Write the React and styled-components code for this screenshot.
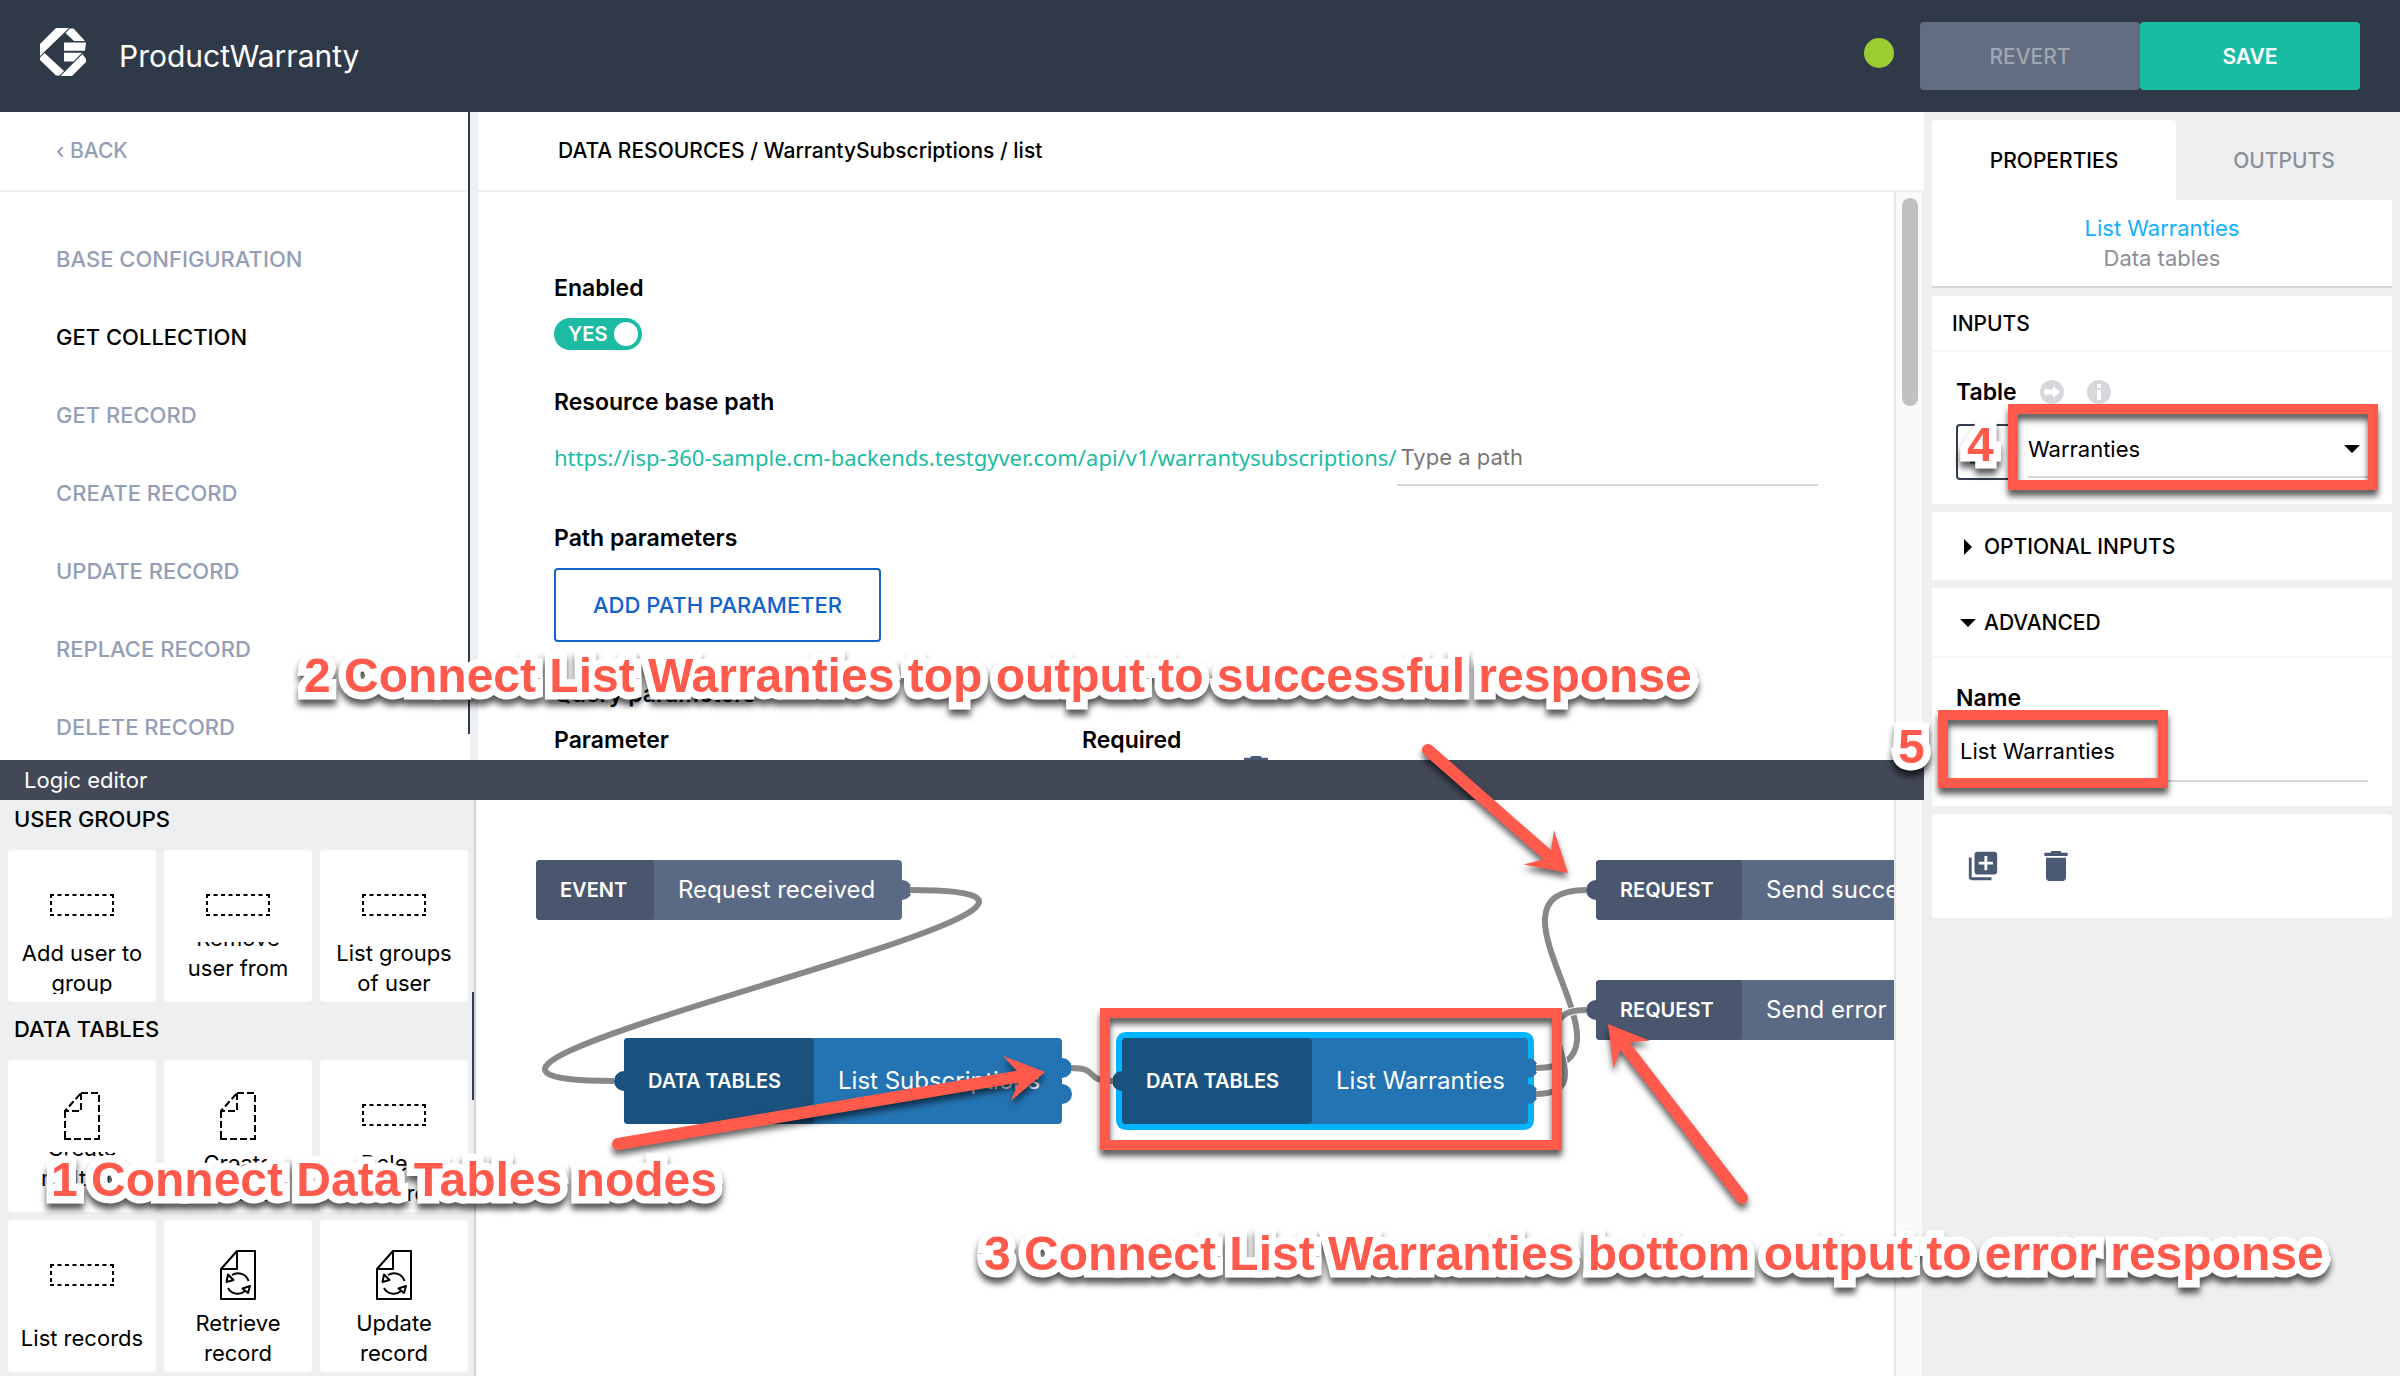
import React from "react";
import styled, { createGlobalStyle, css } from "styled-components";
import { MdDelete, MdLibraryAdd } from "react-icons/md";

const color = {
  header: "#303948",
  bar: "#424856",
  panel: "#eeeff1",
  line: "#d5d6db",
  muted: "#949eb6",
  green: "#1cbca4",
  blue: "#1262cc",
  red: "#ff5a4c",
  icon: "#4a5a75",
  ink: "#000000",
};

const Global = createGlobalStyle`
  *, *::before, *::after { box-sizing: border-box; }
  body {
    margin: 0;
    background: #fff;
    color: ${color.ink};
    font: 400 22px/30px Inter, "Liberation Sans", sans-serif;
  }
  button, input, select { font: inherit; color: inherit; border: 0; padding: 0; background: none; }
  button { cursor: pointer; }
  h1, h2, h3, p, ul { margin: 0; padding: 0; font: inherit; list-style: none; }
`;

const caps = css`
  font-size: 21px;
  line-height: 30px;
  text-transform: uppercase;
`;

/* ---------- shell ---------- */

const Shell = styled.div`
  position: relative;
  display: flex;
  flex-direction: column;
  height: 100vh;
  overflow: hidden;
`;

const Header = styled.header`
  display: flex;
  align-items: center;
  flex: none;
  height: 112px;
  padding: 0 40px;
  background: ${color.header};
  color: #fff;
`;

const LogoMark = styled.svg`
  flex: none;
  margin-bottom: 8px;
`;

const AppTitle = styled.h1`
  flex: 1;
  padding-left: 32px;
  font-size: 30px;
  line-height: 40px;
`;

const Status = styled.span`
  width: 30px;
  height: 30px;
  margin: 0 26px 6px 0;
  border-radius: 50%;
  background: #9bcd33;
`;

const HeaderButton = styled.button`
  ${caps}
  width: 220px;
  height: 68px;
  padding-top: 2px;
  border-radius: 4px;
  font-weight: ${(p) => (p.$primary ? 600 : 500)};
  background: ${(p) => (p.$primary ? "#18bca5" : "#636d81")};
  color: ${(p) => (p.$primary ? "#fff" : "#a0a6b2")};
`;

const Body = styled.div`
  display: grid;
  grid-template-columns: minmax(0, 1fr) 476px;
  flex: 1;
  min-height: 0;
`;

const Workspace = styled.div`
  display: flex;
  flex-direction: column;
  min-height: 0;
`;

/* ---------- resource section ---------- */

const Resource = styled.section`
  display: grid;
  grid-template-columns: 478px minmax(0, 1fr);
  flex: 9 1 0;
  min-height: 0;
  overflow: hidden;
`;

const SideNav = styled.nav`
  display: grid;
  grid-template-columns: minmax(0, 1fr) 2px 8px;
  min-height: 0;
  overflow: hidden;
`;

const NavThumb = styled.div`
  margin-bottom: 32px;
  background: ${color.header};
`;

const Gutter = styled.div`
  background: ${color.panel};
`;

const TopRow = styled.div`
  ${caps}
  text-transform: none;
  display: flex;
  align-items: center;
  flex: none;
  height: 80px;
  padding-left: ${(p) => p.$inset};
  border-bottom: 2px solid #efeff0;
  font-weight: 500;
`;

const NavLink = styled.a`
  display: block;
  color: ${(p) => (p.$active ? color.ink : color.muted)};
  font-weight: 500;
  text-decoration: none;
  text-transform: uppercase;
`;

const NavList = styled.ul`
  padding: 28px 0 0 56px;
`;

const NavItem = styled.li`
  display: flex;
  align-items: center;
  height: 78px;
`;

const Content = styled.div`
  display: flex;
  flex-direction: column;
  min-height: 0;
`;

const Scroller = styled.div`
  display: grid;
  grid-template-columns: minmax(0, 1fr) 30px;
  flex: 1;
  min-height: 0;
  overflow: hidden;
`;

const Track = styled.div`
  padding: 6px 4px 0 6px;
  border: solid #e6e6e8;
  border-width: 0 2px 0 2px;
  border-right-color: ${color.panel};
  background: #fafafa;
`;

const Thumb = styled.div`
  height: 208px;
  border-radius: 8px;
  background: #c1c1c1;
`;

const Form = styled.div`
  display: flex;
  flex-direction: column;
  gap: 36px;
  min-height: 0;
  padding: 80px 76px 0;
`;

const Field = styled.div`
  display: flex;
  flex-direction: column;
  align-items: flex-start;
  flex: none;
  gap: 14px;
`;

const FieldLabel = styled.label`
  font-size: 23px;
  font-weight: 600;
  line-height: 32px;
`;

const Toggle = styled.label`
  display: flex;
  align-items: center;
  justify-content: space-between;
  position: relative;
  width: 88px;
  height: 32px;
  padding: 0 4px 0 14px;
  border-radius: 16px;
  background: ${color.green};
  color: #fff;
  font-size: 20px;
  font-weight: 600;
  input { position: absolute; inset: 0; margin: 0; opacity: 0; }
  i { width: 24px; height: 24px; border-radius: 50%; background: #fff; }
`;

const PathRow = styled.div`
  display: flex;
  align-items: stretch;
  width: 100%;
  max-width: 1264px;
  height: 54px;
`;

const BaseUrl = styled.span`
  font-family: "Noto Sans", sans-serif;
  line-height: 50px;
  color: ${color.green};
  white-space: nowrap;
`;

const LineInput = styled.input`
  flex: 1;
  width: 100%;
  min-width: 0;
  padding: 0 4px 2px;
  border-bottom: 2px solid ${color.line};
  outline: none;
  &::placeholder { color: #777; opacity: 1; }
`;

const OutlineButton = styled.button`
  height: 74px;
  padding: 0 37px;
  border: 2px solid ${color.blue};
  border-radius: 4px;
  color: ${color.blue};
  font-weight: 500;
  text-transform: uppercase;
`;

const ParamTable = styled.table`
  border-collapse: collapse;
  th { width: 528px; padding: 0; text-align: left; font-size: 23px; font-weight: 600; line-height: 32px; }
  td { padding: 0; }
`;

const IconButton = styled.button`
  display: flex;
  color: ${color.icon};
`;

const RowIcon = styled(IconButton)`
  margin-left: 162px;
`;

/* ---------- logic editor ---------- */

const LogicBar = styled.h2`
  flex: none;
  height: 40px;
  padding-left: 24px;
  background: ${color.bar};
  color: #fff;
  font-size: 22px;
  line-height: 40px;
`;

const Logic = styled.section`
  display: grid;
  grid-template-columns: 476px minmax(0, 1fr) 30px;
  flex: 8 1 0;
  min-height: 0;
  overflow: hidden;
`;

const Palette = styled.aside`
  display: grid;
  grid-template-columns: minmax(0, 1fr) 2px;
  min-height: 0;
  border-right: 2px solid #d0d3da;
  background: ${color.panel};
  overflow: hidden;
`;

const PaletteGroups = styled.div`
  display: flex;
  flex-direction: column;
  gap: 8px;
  min-height: 0;
`;

const PaletteThumb = styled.div`
  height: 108px;
  margin-top: 192px;
  background: #2f3d4f;
`;

const GroupTitle = styled.h3`
  padding: 4px 14px 16px;
  font-weight: 500;
  text-transform: uppercase;
`;

const CardGrid = styled.div`
  display: grid;
  grid-template-columns: repeat(3, 148px);
  gap: 8px;
  padding-left: 8px;
`;

const Card = styled.button`
  display: flex;
  flex-direction: column;
  align-items: center;
  gap: 12px;
  height: 152px;
  padding: 30px 8px 8px;
  border-radius: 4px;
  background: #fff;
  svg { flex: none; height: 50px; }
`;

const CardLabel = styled.span`
  display: flex;
  flex-direction: column;
  justify-content: center;
  flex: none;
  height: 52px;
  overflow: hidden;
  white-space: nowrap;
`;

const Canvas = styled.div`
  position: relative;
  overflow: hidden;
`;

const Wires = styled.svg`
  position: absolute;
  left: 0;
  top: 0;
  overflow: visible;
`;

const Node = styled.div`
  position: absolute;
  left: ${(p) => p.$x}px;
  top: ${(p) => p.$y}px;
  display: flex;
  width: ${(p) => p.$w}px;
  height: ${(p) => (p.$blue ? 86 : 60)}px;
  border-radius: 4px;
  background: ${(p) => (p.$blue ? "#2474b3" : "#5b6a84")};
  box-shadow: ${(p) => (p.$selected ? "0 0 0 6px #00b4ff" : "none")};
  color: #fff;
  font-size: 24px;
  white-space: nowrap;
`;

const NodeTag = styled.span`
  display: flex;
  align-items: center;
  flex: none;
  width: ${(p) => p.$w}px;
  padding-left: 24px;
  border-radius: 4px;
  background: ${(p) => (p.$blue ? "#1a527f" : "#4a566d")};
  font-size: 20px;
  font-weight: 600;
`;

const NodeLabel = styled.span`
  display: flex;
  align-items: center;
  padding-left: 24px;
`;

const Port = styled.i`
  position: absolute;
  top: ${(p) => p.$y - 10}px;
  ${(p) => (p.$side === "in" ? "left: -10px;" : "right: -10px;")}
  width: 20px;
  height: 20px;
  border-radius: 10px;
  background: ${(p) => p.$fill};
`;

/* ---------- properties panel ---------- */

const Inspector = styled.aside`
  display: flex;
  flex-direction: column;
  gap: 8px;
  padding: 8px;
  background: ${color.panel};
`;

const Tabs = styled.div`
  display: grid;
  grid-template-columns: 244px minmax(0, 1fr);
`;

const Tab = styled.button`
  ${caps}
  height: 80px;
  padding-top: 2px;
  border-radius: 4px 4px 0 0;
  background: ${(p) => (p.$active ? "#fff" : "transparent")};
  color: ${(p) => (p.$active ? color.ink : "#8b8f98")};
  font-weight: 500;
`;

const Summary = styled.div`
  padding: 13px 0;
  border-bottom: 2px solid ${color.line};
  background: #fff;
  text-align: center;
`;

const SummaryLine = styled.p`
  color: ${(p) => (p.$link ? "#12b0ff" : "#8b8f98")};
`;

const Panel = styled.section`
  background: #fff;
`;

const PanelTitle = styled.h3`
  ${caps}
  display: flex;
  align-items: center;
  height: ${(p) => (p.$tall ? 68 : 54)}px;
  padding-top: 2px;
  padding-left: ${(p) => (p.$tall ? 28 : 20)}px;
  font-weight: 500;
  svg { width: 16px; margin-right: 8px; }
`;

const PanelBody = styled.div`
  display: flex;
  flex-direction: column;
  gap: 16px;
  padding: 24px;
  border-top: 2px solid #f6f6f7;
`;

const LabelRow = styled.div`
  display: flex;
  align-items: center;
  gap: 23px;
  height: 32px;
`;

const SelectRow = styled.div`
  display: flex;
  gap: 16px;
`;

const BindingButton = styled.button`
  display: flex;
  align-items: flex-end;
  justify-content: center;
  width: 56px;
  height: 56px;
  padding-bottom: 14px;
  border: 2px solid #333d4e;
  border-radius: 4px;
  color: #333d4e;
`;

const SelectBox = styled.div`
  display: flex;
  align-items: center;
  flex: 1;
  height: 54px;
  padding-bottom: 2px;
  border-bottom: 2px solid ${color.line};
`;

const Select = styled.select`
  appearance: none;
  flex: 1;
  height: 50px;
  outline: none;
`;

const Caret = styled.svg`
  flex: none;
  margin-right: 8px;
  pointer-events: none;
`;

const NameInput = styled(LineInput)`
  flex: none;
  height: 60px;
  padding-bottom: 0;
`;

const NameField = styled.div`
  display: flex;
  flex-direction: column;
  gap: 8px;
`;

const Actions = styled.div`
  display: flex;
  align-items: center;
  gap: 36px;
  height: 104px;
  padding-left: 34px;
  border-radius: 4px;
  background: #fff;
`;

/* ---------- annotations laid over the editor ---------- */

const Overlay = styled.div`
  position: absolute;
  inset: 0;
  overflow: hidden;
  pointer-events: none;
`;

const Note = styled.span`
  position: absolute;
  left: ${(p) => p.$x}px;
  top: ${(p) => p.$y}px;
  color: ${color.red};
  font: 700 48px/48px "Liberation Sans", Arial, sans-serif;
  white-space: nowrap;
  -webkit-text-stroke: 15px #fff;
  stroke-linejoin: round;
  paint-order: stroke fill;
  filter: drop-shadow(0 6px 3px rgba(0, 0, 0, 0.65));
`;

const Frame = styled.div`
  position: absolute;
  left: ${(p) => p.$x}px;
  top: ${(p) => p.$y}px;
  width: ${(p) => p.$w}px;
  height: ${(p) => p.$h}px;
  border: 10px solid ${color.red};
  filter: drop-shadow(0 6px 3px rgba(0, 0, 0, 0.65));
`;

const Arrows = styled.svg`
  position: absolute;
  left: 0;
  top: 0;
  overflow: visible;
  filter: drop-shadow(0 5px 3px rgba(0, 0, 0, 0.6));
`;

/* ---------- drawings ---------- */

const Logo = () => (
  <LogoMark width="47" height="48" viewBox="0 0 47 48" fill="#fff" aria-hidden="true">
    <path d="M16 0H29L0 28V16Z" />
    <path d="M0 29.500L4.500 25L24 43L19.500 47.500H16L0 32Z" />
    <path d="M20.500 48H32L46 34V31L42.500 26Z" />
    <path d="M25.500 5L30 .5H33.500L45 13H34Z" />
    <path d="M24 14.500H46L45 22.700H24Z" />
    <path d="M24 24.700H42L33.500 33.500H24Z" />
  </LogoMark>
);

const DashedBox = () => (
  <svg width="64" viewBox="0 0 64 50" fill="none" stroke="#000" strokeWidth="2" aria-hidden="true">
    <path d="M0 15H64M0 35H64" strokeDasharray="4 3.500" />
    <path d="M1 14V36M63 14V36" strokeDasharray="4 3" />
  </svg>
);

const DashedFile = () => (
  <svg width="36" viewBox="0 0 36 50" fill="none" stroke="#000" strokeWidth="2" aria-hidden="true">
    <path d="M17 3H35V49M1 21V49M0 49H36M17 3V21H1L17 3" strokeDasharray="7 3" />
  </svg>
);

const SyncFile = () => (
  <svg width="36" viewBox="0 0 36 50" fill="none" stroke="#000" strokeWidth="2" strokeLinejoin="round" aria-hidden="true">
    <path d="M17 1H35V49H1V19L17 1V19H1" />
    <path d="M12 25A11 11 0 0 1 28.500 31M8 38A11 11 0 0 0 25 41" />
    <path d="M8 24.500L6.500 32L13.500 30ZM30 36L22.500 38.500L28 43Z" />
  </svg>
);

const icons = { box: DashedBox, file: DashedFile, sync: SyncFile };

const ArrowBadge = () => (
  <svg width="24" height="24" viewBox="0 0 24 24" aria-hidden="true">
    <circle cx="12" cy="12" r="12" fill="#d7d8dc" />
    <path d="M4 9.500H13V6L20 12L13 18V14.500H4Z" fill="#fff" />
  </svg>
);

const InfoBadge = () => (
  <svg width="24" height="24" viewBox="0 0 24 24" aria-hidden="true">
    <circle cx="12" cy="12" r="12" fill="#d7d8dc" />
    <path d="M10 4H14V8H10ZM10 10H14V20H10Z" fill="#fff" />
  </svg>
);

const arrowPath = ([x1, y1], [x2, y2]) => {
  const len = Math.hypot(x2 - x1, y2 - y1);
  const ux = (x2 - x1) / len;
  const uy = (y2 - y1) / len;
  const at = (back, side) => `${x2 - ux * back - uy * side} ${y2 - uy * back + ux * side}`;
  return {
    shaft: `M${x1} ${y1}L${at(26, 0)}`,
    head: `M${at(0, 0)}L${at(39, 23)}L${at(27, 5)}L${at(27, -5)}L${at(39, -23)}Z`,
  };
};

/* ---------- data ---------- */

const navItems = [
  "Base configuration",
  "Get collection",
  "Get record",
  "Create record",
  "Update record",
  "Replace record",
  "Delete record",
];

const groups = [
  {
    title: "User groups",
    cards: [
      ["box", "Add user to", "group"],
      ["box", "Remove", "user from", "group"],
      ["box", "List groups", "of user"],
    ],
  },
  {
    title: "Data tables",
    cards: [
      ["file", "Create", "multiple", "records"],
      ["file", "Create", "record"],
      ["box", "Delete", "record"],
      ["box", "List records"],
      ["sync", "Retrieve", "record"],
      ["sync", "Update", "record"],
    ],
  },
];

const nodes = [
  { x: 60, y: 60, w: 366, tagW: 118, tag: "EVENT", label: "Request received", outs: [30] },
  { x: 148, y: 238, w: 438, tagW: 190, tag: "DATA TABLES", label: "List Subscriptions", blue: true, ins: [43], outs: [30, 56] },
  { x: 646, y: 238, w: 406, tagW: 190, tag: "DATA TABLES", label: "List Warranties", blue: true, selected: true, ins: [43], outs: [30, 56] },
  { x: 1120, y: 60, w: 420, tagW: 146, tag: "REQUEST", label: "Send success response", ins: [30] },
  { x: 1120, y: 180, w: 420, tagW: 146, tag: "REQUEST", label: "Send error response", ins: [30] },
];

const wires = [
  "M434 90C759 90 -187 281 138 281",
  "M595 268C625 268 607 281 637 281",
  "M1060 268C1178 268 992 90 1110 90",
  "M1060 294C1132 294 1038 210 1110 210",
];

const arrows = [
  [[618, 1144], [1045, 1072]],
  [[1428, 750], [1568, 873]],
  [[1742, 1198], [1608, 1024]],
];

const notes = [
  [304, 652, "2 Connect List Warranties top output to successful response"],
  [51, 1156, "1 Connect Data Tables nodes"],
  [984, 1230, "3 Connect List Warranties bottom output to error response"],
  [1967, 421, "4"],
  [1898, 723, "5"],
];

const frames = [
  [1100, 1008, 462, 142],
  [2008, 404, 370, 86],
  [1938, 710, 230, 78],
];

/* ---------- sections ---------- */

const ResourceSection = () => (
  <Resource>
    <SideNav>
      <div>
        <TopRow $inset="56px">
          <NavLink href="#back">‹ Back</NavLink>
        </TopRow>
        <NavList>
          {navItems.map((item) => (
            <NavItem key={item}>
              <NavLink href={`#${item.replace(" ", "-").toLowerCase()}`} $active={item === "Get collection"}>
                {item}
              </NavLink>
            </NavItem>
          ))}
        </NavList>
      </div>
      <NavThumb />
      <Gutter />
    </SideNav>
    <Content>
      <TopRow $inset="80px">DATA RESOURCES / WarrantySubscriptions / list</TopRow>
      <Scroller>
        <Form>
          <Field>
            <FieldLabel htmlFor="enabled">Enabled</FieldLabel>
            <Toggle>
              <input id="enabled" type="checkbox" role="switch" defaultChecked />
              YES
              <i />
            </Toggle>
          </Field>
          <Field>
            <FieldLabel htmlFor="path">Resource base path</FieldLabel>
            <PathRow>
              <BaseUrl>https://isp-360-sample.cm-backends.testgyver.com/api/v1/warrantysubscriptions/</BaseUrl>
              <LineInput id="path" type="text" placeholder="Type a path" />
            </PathRow>
          </Field>
          <Field>
            <FieldLabel as="h3">Path parameters</FieldLabel>
            <OutlineButton type="button">Add path parameter</OutlineButton>
          </Field>
          <Field>
            <FieldLabel as="h3">Query parameters</FieldLabel>
            <ParamTable>
              <thead>
                <tr>
                  <th scope="col">Parameter</th>
                  <th scope="col">Required</th>
                </tr>
              </thead>
              <tbody>
                <tr>
                  <td />
                  <td>
                    <RowIcon type="button" aria-label="Delete parameter">
                      <svg width="24" height="31" viewBox="5 3 14 18" fill="currentColor">
                        <path d="M6 19c0 1.100.9 2 2 2h8c1.100 0 2-.9 2-2V7H6v12zM19 4h-3.500l-1-1h-5l-1 1H5v2h14V4z" />
                      </svg>
                    </RowIcon>
                  </td>
                </tr>
              </tbody>
            </ParamTable>
          </Field>
        </Form>
        <Track>
          <Thumb />
        </Track>
      </Scroller>
    </Content>
  </Resource>
);

const LogicSection = () => (
  <Logic>
    <Palette>
      <PaletteGroups>
        {groups.map((group) => (
          <div key={group.title}>
            <GroupTitle>{group.title}</GroupTitle>
            <CardGrid>
              {group.cards.map(([icon, ...lines]) => {
                const Icon = icons[icon];
                return (
                  <Card key={lines.join(" ")} type="button">
                    <Icon />
                    <CardLabel>
                      {lines.map((line) => (
                        <span key={line}>{line}</span>
                      ))}
                    </CardLabel>
                  </Card>
                );
              })}
            </CardGrid>
          </div>
        ))}
      </PaletteGroups>
      <PaletteThumb />
    </Palette>
    <Canvas>
      {nodes.map((n) => (
        <Node key={n.label} $x={n.x} $y={n.y} $w={n.w} $blue={n.blue} $selected={n.selected}>
          {(n.ins || []).map((y) => (
            <Port key={y} $side="in" $y={y} $fill={n.blue ? "#1a527f" : "#4a566d"} />
          ))}
          {(n.outs || []).map((y) => (
            <Port key={y} $side="out" $y={y} $fill={n.blue ? "#2474b3" : "#5b6a84"} />
          ))}
          <NodeTag $w={n.tagW} $blue={n.blue}>{n.tag}</NodeTag>
          <NodeLabel>{n.label}</NodeLabel>
        </Node>
      ))}
      <Wires width="1" height="1" fill="none" aria-hidden="true">
        {wires.map((d) => (
          <g key={d}>
            <path d={d} stroke="#fff" strokeWidth="8" />
            <path d={d} stroke="#888" strokeWidth="6" />
          </g>
        ))}
      </Wires>
    </Canvas>
    <Track />
  </Logic>
);

const InspectorSection = () => (
  <Inspector>
    <div>
      <Tabs>
        <Tab type="button" $active>Properties</Tab>
        <Tab type="button">Outputs</Tab>
      </Tabs>
      <Summary>
        <SummaryLine $link>List Warranties</SummaryLine>
        <SummaryLine>Data tables</SummaryLine>
      </Summary>
    </div>
    <Panel>
      <PanelTitle>Inputs</PanelTitle>
      <PanelBody>
        <LabelRow>
          <FieldLabel htmlFor="table">Table</FieldLabel>
          <ArrowBadge />
          <InfoBadge />
        </LabelRow>
        <SelectRow>
          <BindingButton type="button" aria-label="Change binding">
            <svg width="28" height="4" viewBox="0 0 28 4">
              <path d="M0 2H22" stroke="currentColor" strokeWidth="3" />
            </svg>
          </BindingButton>
          <SelectBox>
            <Select id="table" defaultValue="Warranties">
              <option>Warranties</option>
            </Select>
            <Caret width="16" height="8" viewBox="0 0 16 8">
              <path d="M0 0H16L8 8Z" />
            </Caret>
          </SelectBox>
        </SelectRow>
      </PanelBody>
    </Panel>
    <Panel>
      <PanelTitle $tall>
        <svg height="16" viewBox="0 0 16 16" aria-hidden="true"><path d="M4 0L12 8L4 16Z" /></svg>
        Optional inputs
      </PanelTitle>
    </Panel>
    <Panel>
      <PanelTitle $tall>
        <svg height="16" viewBox="0 0 16 16" aria-hidden="true"><path d="M0 4H16L8 12Z" /></svg>
        Advanced
      </PanelTitle>
      <PanelBody>
        <NameField>
          <FieldLabel htmlFor="name">Name</FieldLabel>
          <NameInput id="name" type="text" defaultValue="List Warranties" />
        </NameField>
      </PanelBody>
    </Panel>
    <Actions>
      <IconButton type="button" aria-label="Duplicate"><MdLibraryAdd size={34} /></IconButton>
      <IconButton type="button" aria-label="Delete"><MdDelete size={40} /></IconButton>
    </Actions>
  </Inspector>
);

const Annotations = () => (
  <Overlay>
    {frames.map(([x, y, w, h]) => (
      <Frame key={x} $x={x} $y={y} $w={w} $h={h} />
    ))}
    <Arrows width="1" height="1" fill={color.red} aria-hidden="true">
      {arrows.map(([from, to]) => {
        const { shaft, head } = arrowPath(from, to);
        return (
          <g key={shaft}>
            <path d={shaft} stroke={color.red} strokeWidth="12" strokeLinecap="round" />
            <path d={head} />
          </g>
        );
      })}
    </Arrows>
    {notes.map(([x, y, text]) => (
      <Note key={text} $x={x} $y={y}>{text}</Note>
    ))}
  </Overlay>
);

export default function App() {
  return (
    <>
      <Global />
      <Shell>
        <Header>
          <Logo />
          <AppTitle>ProductWarranty</AppTitle>
          <Status />
          <HeaderButton type="button">Revert</HeaderButton>
          <HeaderButton type="button" $primary>Save</HeaderButton>
        </Header>
        <Body>
          <Workspace>
            <ResourceSection />
            <LogicBar>Logic editor</LogicBar>
            <LogicSection />
          </Workspace>
          <InspectorSection />
        </Body>
        <Annotations />
      </Shell>
    </>
  );
}
